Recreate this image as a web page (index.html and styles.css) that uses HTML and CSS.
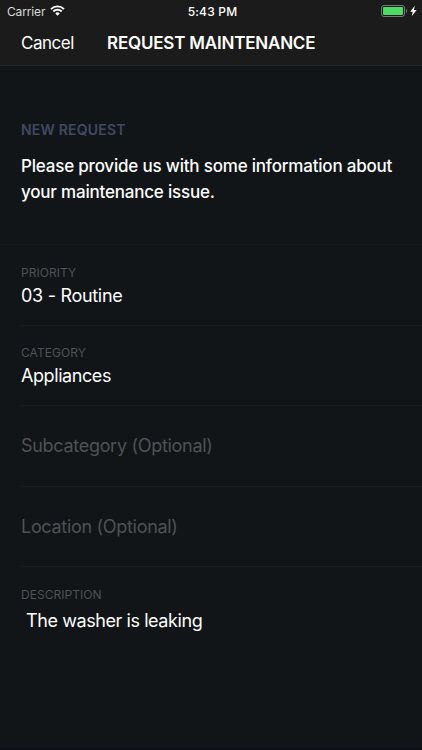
FILE: index.html
```html
<!DOCTYPE html>
<html lang="en">
<head>
    <meta charset="UTF-8">
    <meta name="viewport" content="width=device-width, initial-scale=1.0">
    <title>Request Maintenance</title>
    <link rel="stylesheet" href="styles.css">
</head>
<body>

    <div class="screen">
        <header>
            <div class="status">
                <div class="carrier">
                    <span class="carrier-name">Carrier</span>
                    <svg class="wifi" width="15" height="11" viewBox="0 0 15 11" fill="none" stroke="#fff" stroke-width="1.9">
                        <path d="M1 4.1a9.2 9.2 0 0 1 13 0"/>
                        <path d="M3.3 6.5a5.9 5.9 0 0 1 8.4 0"/>
                        <path d="M5.3 8.4a3.1 3.1 0 0 1 4.4 0L7.5 10.7z" fill="#fff" stroke="none"/>
                    </svg>
                </div>
                <span class="time">5:43 PM</span>
                <div class="power">
                    <svg width="37" height="12" viewBox="0 0 37 12">
                        <rect x=".5" y=".5" width="23" height="11" rx="2.5" fill="none" stroke="#77787a"/>
                        <rect x="2" y="2" width="20" height="8" rx="1" fill="#4cd964"/>
                        <path d="M25 4c1.4.4 1.4 3.6 0 4z" fill="#77787a"/>
                        <path d="M33.8 .8L29.2 6.7h2.6L30.7 11.2l5-6.3h-2.8z" fill="#fff"/>
                    </svg>
                </div>
            </div>
            <div class="navbar">
                <a class="cancel">Cancel</a>
                <h1>REQUEST MAINTENANCE</h1>
            </div>
        </header>

        <section class="intro">
            <h2>NEW REQUEST</h2>
            <p>Please provide us with some information about<br>your maintenance issue.</p>
        </section>

        <div class="form">
            <div class="field">
                <label>PRIORITY</label>
                <span class="value">03 - Routine</span>
            </div>
            <div class="field">
                <label>CATEGORY</label>
                <span class="value tight">Appliances</span>
            </div>
            <div class="field empty">
                <span class="value">Subcategory (Optional)</span>
            </div>
            <div class="field empty">
                <span class="value">Location (Optional)</span>
            </div>
            <div class="field description">
                <label>DESCRIPTION</label>
                <span class="value tight">The washer is leaking</span>
            </div>
        </div>
    </div>

</body>
</html>
```

FILE: styles.css
```css
body {
    margin: 0;
    font-family: Inter, "Liberation Sans", sans-serif;
    background-color: #111518;
    color: #fff;
}
.screen {
    box-sizing: border-box;
    width: 422px;
    height: 750px;
    overflow: hidden;
    border-bottom: 2px solid #0d0f16;
}
header {
    background-color: #1b1b1b;
    border-bottom: 1px solid #23282b;
}
.status {
    display: grid;
    grid-template-columns: 1fr auto 1fr;
    align-items: center;
    height: 22px;
    padding: 0 4px 0 7px;
}
.carrier {
    display: flex;
    align-items: center;
    gap: 5px;
}
.carrier-name {
    font-size: 12px;
    letter-spacing: -0.15px;
    color: #dcdcdc;
}
.wifi {
    margin-bottom: 1px;
}
.time {
    font-size: 12px;
    font-weight: 500;
    letter-spacing: 0.2px;
}
.power {
    display: flex;
    justify-content: flex-end;
}
.navbar {
    box-sizing: border-box;
    display: flex;
    align-items: center;
    height: 43px;
    padding: 0 0 1px 21px;
}
.cancel {
    width: 86px;
    font-size: 17px;
    letter-spacing: -0.5px;
}
h1 {
    margin: 0;
    font-size: 17px;
    font-weight: 600;
    letter-spacing: -0.2px;
    white-space: nowrap;
}
.intro {
    box-sizing: border-box;
    height: 179px;
    padding: 54px 0 0 21px;
    border-bottom: 1px solid #181c1f;
}
h2 {
    margin: 0 0 14px;
    font-size: 14px;
    font-weight: 600;
    line-height: 20px;
    letter-spacing: 0.2px;
    color: #424863; /* Muted indigo for the section title */
}
.intro p {
    margin: 0;
    font-size: 17px;
    font-weight: 500;
    line-height: 25.5px;
    letter-spacing: -0.2px;
    white-space: nowrap;
}
.form {
    padding-left: 21px;
}
.field {
    box-sizing: border-box;
    height: 80.5px;
    padding-top: 19.5px;
    border-bottom: 1px solid #191d20;
}
.field label {
    display: block;
    font-size: 12px;
    line-height: 16px;
    letter-spacing: 0.05px;
    color: #505154;
}
.value {
    display: block;
    font-size: 18px;
    line-height: 30px;
    letter-spacing: -0.3px;
}
.tight {
    letter-spacing: -0.42px;
}
.empty {
    padding-top: 25px;
}
.empty .value {
    color: #505154;
}
.description {
    border-bottom: none;
}
.description .value {
    padding: 3px 0 0 5px;
}
```
